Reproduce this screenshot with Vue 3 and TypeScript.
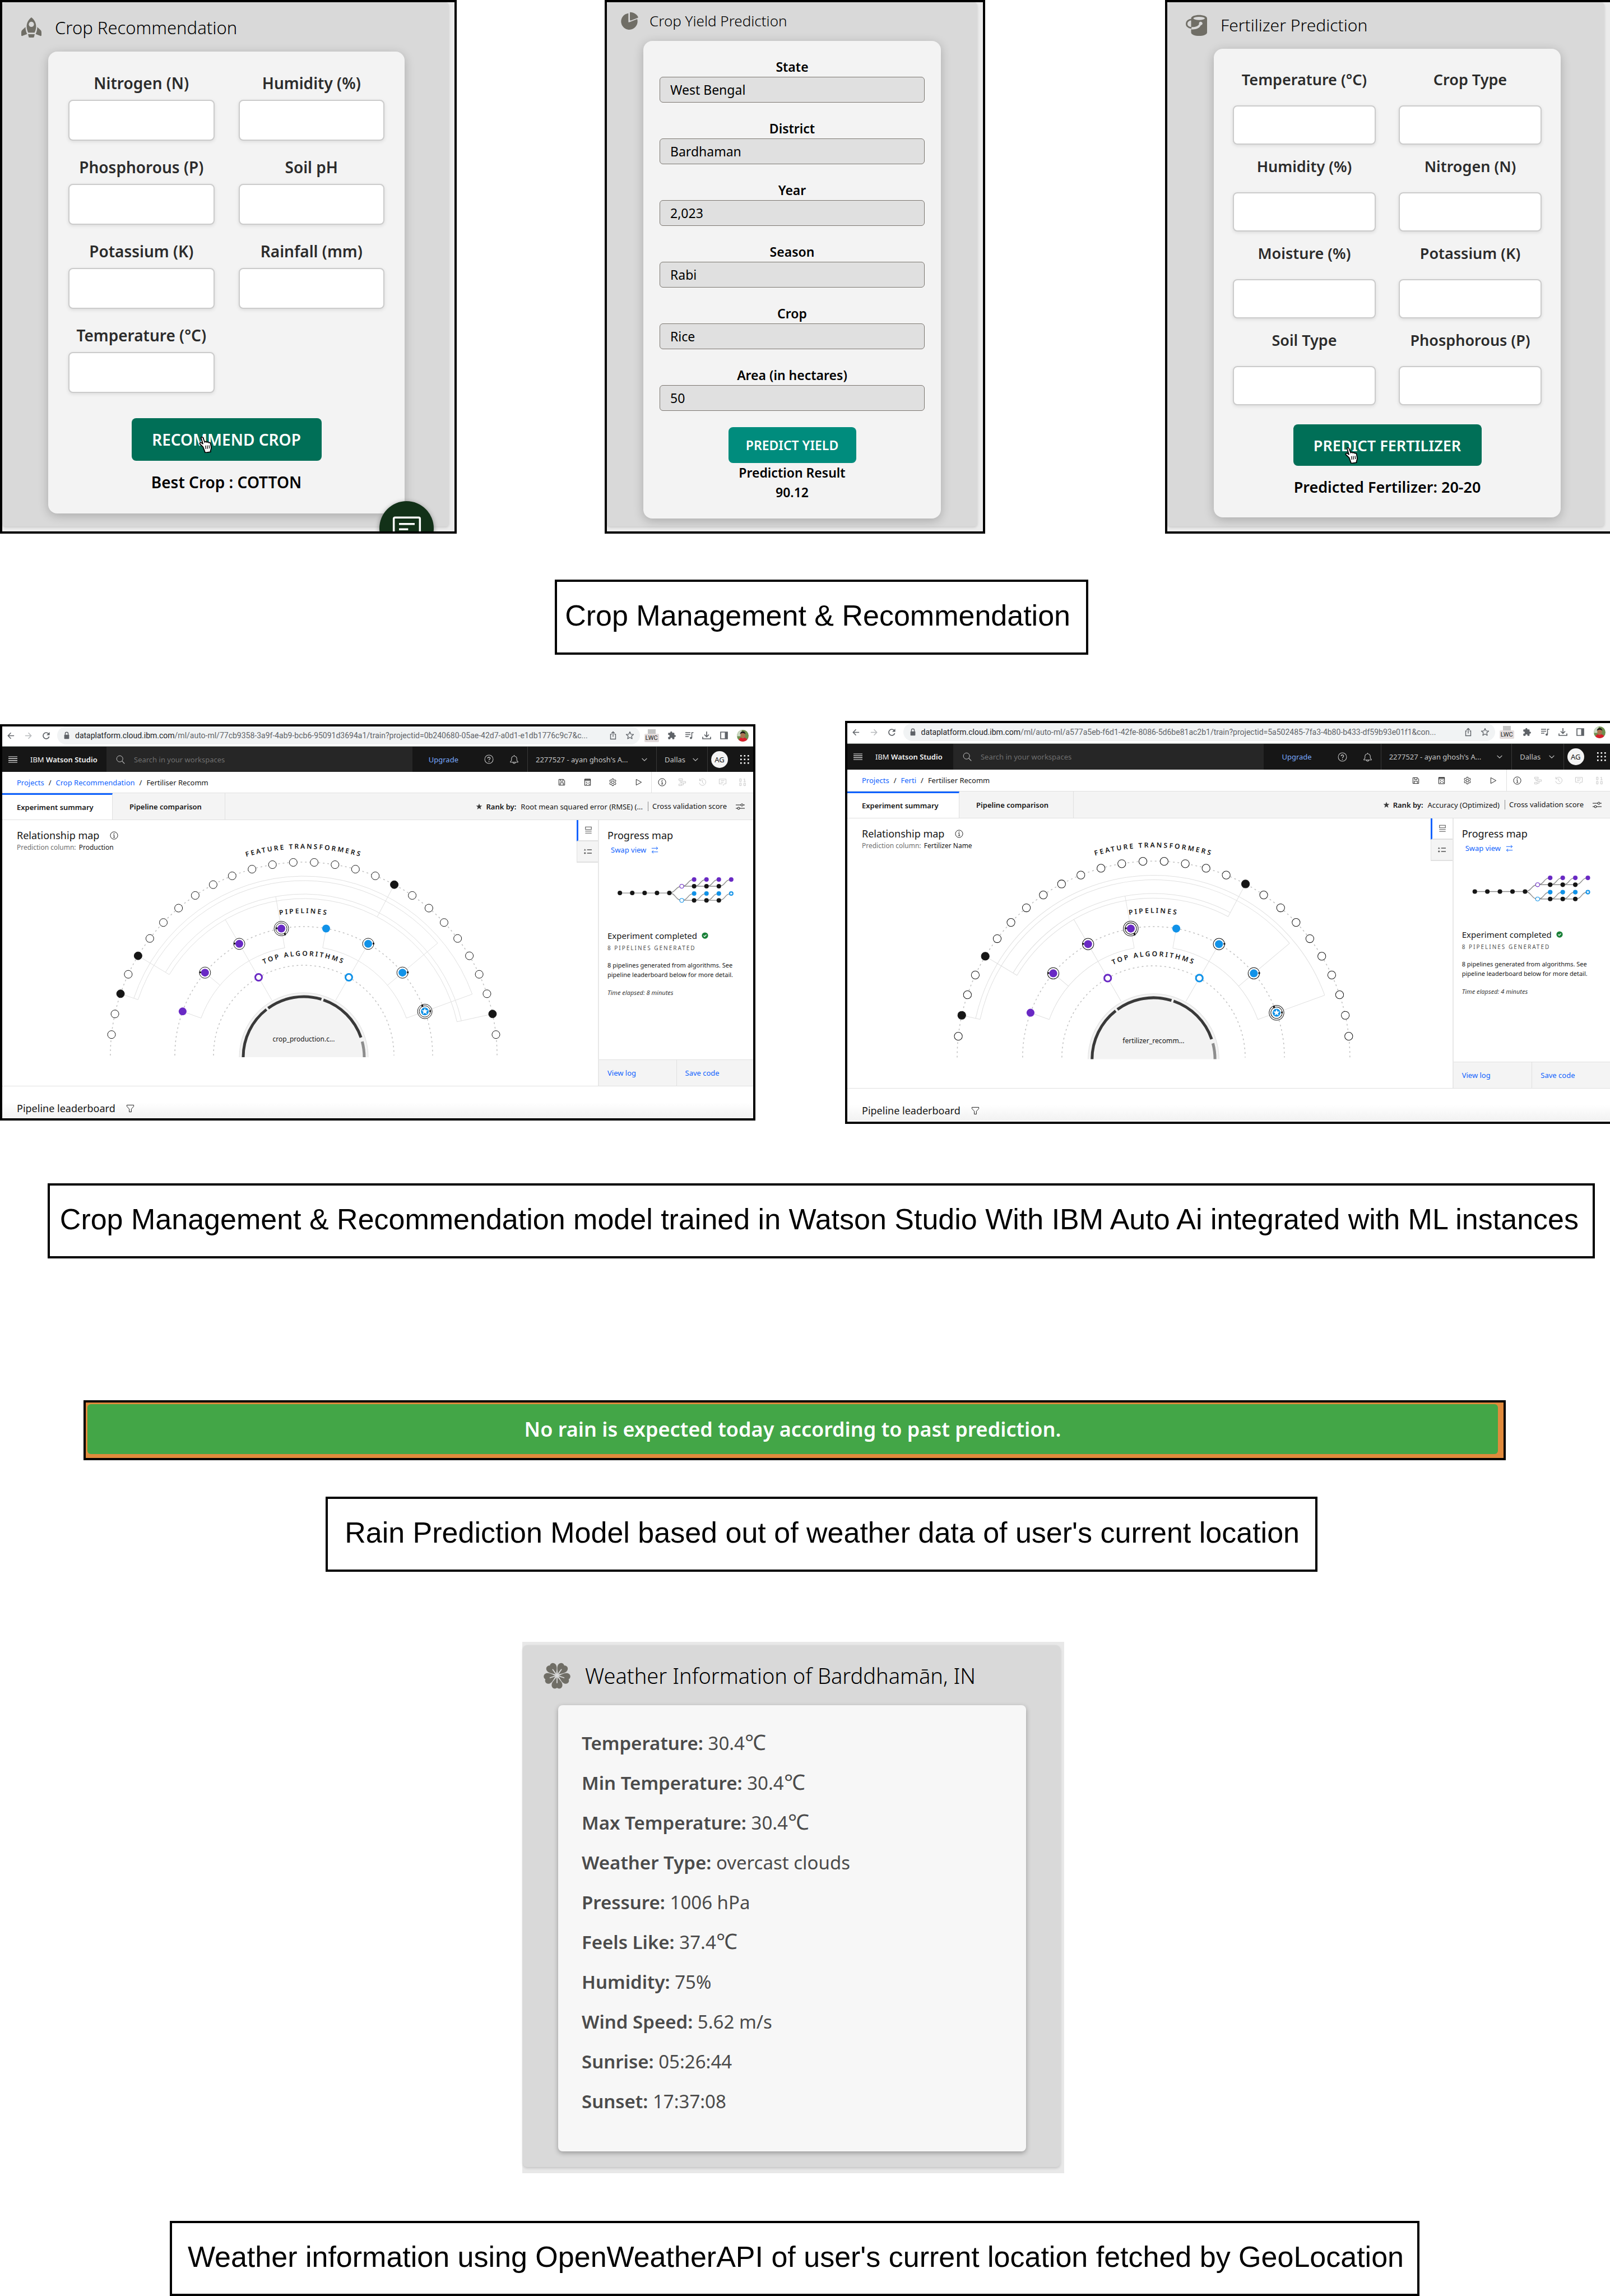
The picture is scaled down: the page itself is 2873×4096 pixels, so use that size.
<script setup lang="ts">
import { h, ref } from 'vue'

interface Studio {
  id: string
  urlRest: string
  project: string
  column: string
  rank: string
  file: string
  minutes: number
  filled: number[]
  outerStart: number
  innerEnd: number
}

const S = 'fill="none" stroke="currentColor"'
const glyphs: Record<string, string> = {
  rocket:
    '<path fill="currentColor" d="M12 0c3.400 2.600 5.600 6.200 5.600 10.600 0 2.700-.7 5.100-1.800 7.600H8.200c-1.100-2.500-1.800-4.900-1.800-7.600C6.400 6.200 8.600 2.600 12 0zM5 11.500c0 3 .7 5.600 1.900 8.300L1.300 22c-.7.300-1.300 0-1.300-.8v-3.400c0-1.300.5-2.400 1.500-3.200zM19 11.500c0 3-.7 5.600-1.900 8.300l5.600 2.200c.7.300 1.300 0 1.300-.8v-3.400c0-1.300-.5-2.400-1.500-3.200zM8 20h8l-.8 3.200c-.1.500-.5.800-1 .8H9.800c-.5 0-.9-.3-1-.8z"/><circle cx="12" cy="8.300" r="3.100" fill="#d9d9d9"/>',
  pie:
    '<path fill="currentColor" d="M10 2v11.300c0 .6.5.900 1 .7l10.800-4.200A11 11 0 1 1 10 2z"/><path fill="currentColor" d="M12.500.6c4.600.2 8.600 2.600 10.500 6.400.2.400 0 .8-.4 1l-9.100 3.600c-.8.300-1.500-.1-1.500-.9V1.100c0-.3.200-.5.500-.5z"/>',
  bucket:
    '<path fill="currentColor" d="M6 4.500C6 1.800 10.500.5 15 .5s9 1.300 9 4V20c0 2.600-4.500 4-9 4s-9-1.400-9-4v-3.500c4 .6 9-.4 11-4.500a2 2 0 1 0-2-1.200C14 13.500 9.500 14.500 6 14z"/><ellipse cx="15" cy="4.300" rx="6.500" ry="1.800" fill="#d9d9d9"/><path fill="none" stroke="currentColor" stroke-width="1.800" d="M7 5.500C3 6 .9 7.800.9 10.500c0 2.400 2.400 4 5.600 4.600"/>',
  clover:
    [0, 72, 144, 216, 288]
      .map(
        (a) =>
          `<g transform="rotate(${a + 36} 12 12)"><path fill="currentColor" d="M12 11C10.500 8.500 7.200 6.500 7.200 3.500 7.200 1.500 8.500.3 10 .3c.8 0 1.500.3 2 .8.500-.5 1.200-.8 2-.8 1.500 0 2.800 1.200 2.800 3.200 0 3-3.300 5-4.800 7.500z"/><path stroke="#d9d9d9" stroke-width=".9" stroke-linecap="round" d="M12 11V5.500"/></g>`,
      )
      .join(''),
  chat: `<path ${S} stroke-width="1.500" d="M3 3.500h18a1 1 0 0 1 1 1V19a1 1 0 0 1-1 1h-6l-3 3-3-3H3a1 1 0 0 1-1-1V4.500a1 1 0 0 1 1-1zM6 8.500h12M6 12.500h7"/>`,
  hand:
    '<path fill="#fff" stroke="#000" stroke-width="1.400" stroke-linejoin="round" d="M7.500 15.500 3.200 11.600c-1.300-1.400.6-3.200 2-2.100l2 1.500L4.800 3.200c-.5-1.800 1.900-2.600 2.600-.8L10 8.800c.7-1.500 2.600-1.200 2.900.1.900-1.100 2.500-.6 2.800.6 1-.8 2.400-.1 2.500 1.200l.9 5.300c.2 2-.3 3-1 4.800l.2 1.700-7.800 1.200z"/><path stroke="#000" stroke-width="1" d="m10.800 13.500.8 5M13.400 13.200l.7 5M16 13l.6 4.600"/>',
  back: `<path ${S} stroke-width="1.600" d="M14 8H2.500M8 2.500 2.500 8 8 13.500"/>`,
  forward: `<path ${S} stroke-width="1.600" d="M2 8h11.500M8 2.500 13.500 8 8 13.500"/>`,
  reload: `<path ${S} stroke-width="1.800" d="M13.500 9.500A5.800 5.800 0 1 1 12.500 4.400L13.500 5.500"/><path fill="currentColor" d="M14.500 1v6h-6z"/>`,
  lock: `<rect x="3" y="6.500" width="10" height="8.500" rx="1" fill="currentColor"/><path ${S} stroke-width="1.600" d="M5 7V4.500a3 3 0 0 1 6 0V7"/>`,
  share: `<path ${S} stroke-width="1.400" d="M5.500 6H3.500v8.500h9V6h-2M8 10.500V1.500M5 4.300 8 1.500l3 2.800"/>`,
  star: `<path ${S} stroke-width="1.300" stroke-linejoin="round" d="m8 1.500 1.900 4.300 4.600.4-3.500 3.100 1 4.600L8 11.500l-4 2.400 1-4.600L1.500 6.200l4.600-.4z"/>`,
  starFill:
    '<path fill="currentColor" d="m8 .8 1.900 5h5.300L11 9.100l1.600 5.500L8 11.400l-4.600 3.200L5 9.100.8 5.800h5.300z"/>',
  puzzle:
    '<path fill="currentColor" d="M13.300 7.300h-.9V4.500c0-.8-.6-1.300-1.300-1.300H8.500V2.500a1.700 1.700 0 0 0-3.400 0v.7H2.600c-.7 0-1.300.5-1.300 1.300V7h.8a1.900 1.900 0 0 1 0 3.800h-.8v2.600c0 .7.600 1.300 1.300 1.300h2.600v-.9a1.800 1.800 0 0 1 3.600 0v.9h2.300c.7 0 1.300-.6 1.300-1.300v-2.700h.9a1.700 1.700 0 0 0 0-3.400z"/>',
  playlist: `<path ${S} stroke-width="1.500" d="M1 3h9M1 6.500h9M1 10h6M12.500 12.500V3h3"/><circle cx="11" cy="12.500" r="2" fill="currentColor"/>`,
  download: `<path ${S} stroke-width="1.700" d="M8 1v9M4 6.500 8 10.500l4-4M1 10.500V14h14v-3.500"/>`,
  sidebar: `<path ${S} stroke-width="1.700" d="M2 2h12v12H2z"/><path fill="currentColor" d="M9.500 2H14v12H9.500z"/>`,
  menu: `<path ${S} stroke-width="1.200" d="M0 3h16M0 6.300h16M0 9.700h16M0 13h16"/>`,
  search: `<circle cx="6.700" cy="6.700" r="5.500" ${S}/><path ${S} stroke-width="1.100" d="m10.700 10.700 4.600 4.600"/>`,
  help: `<circle cx="8" cy="8" r="7" ${S}/><path ${S} stroke-width="1.200" d="M5.900 6.500c0-2.700 4.200-2.700 4.200-.1C10.100 7.900 8 7.900 8 9.700"/><circle cx="8" cy="11.800" r=".8" fill="currentColor"/>`,
  bell: `<path ${S} d="M8 1v1.500M3.500 7a4.500 4.500 0 0 1 9 0v3l1.800 2v1H1.700v-1l1.800-2zM6 13.200c0 2.400 4 2.400 4 0"/>`,
  chevron: `<path ${S} stroke-width="1.300" d="m3 5.500 5 5 5-5"/>`,
  save: `<path ${S} d="M2.500 2.500h8.500l2.500 2.500v8.500h-11zM5.500 2.500v3.500h5V2.500M5 13.500V9h6v4.500"/>`,
  table: `<path ${S} d="M2.500 2h11v12h-11zM2.500 5h11"/><path fill="currentColor" d="M2.500 2h11v1.500h-11zM5 7.500h1.500V9H5zM8 9h1.500v1.500H8zM11 7.500h1V9h-1zM5 11h1.500v1.500H5zM10.500 11H12v1.500h-1.500z"/>`,
  gear: `<circle cx="8" cy="8" r="2.500" ${S}/><path ${S} stroke-linejoin="round" d="M6.700 1.500h2.600l.4 1.900 1.300.7 1.800-.7 1.300 2.300L12.600 7v2l1.500 1.300-1.300 2.300-1.800-.7-1.300.7-.4 1.900H6.700l-.4-1.900-1.300-.7-1.800.7-1.300-2.300L3.400 9V7L1.900 5.700l1.300-2.300 1.800.7 1.300-.7z"/>`,
  play: `<path ${S} stroke-linejoin="round" d="M3.500 2.500 13.500 8l-10 5.500z"/>`,
  info: `<circle cx="8" cy="8" r="7" ${S}/><path ${S} d="M6.500 7H8.200v4.500M6.300 11.500h3.600"/><circle cx="8" cy="4.500" r=".9" fill="currentColor"/>`,
  flow: `<path ${S} d="M1.500 1.500h7v3h-7zM6.500 6.500h8v3h-8zM1.500 11.500h5v3h-5zM4 4.500V8h2.500M10 9.500V13H6.500"/>`,
  history: `<path ${S} d="M2.500 5A6.300 6.300 0 1 1 2 9M2.500 1v4h4M8 4v4.500l3 2.500"/>`,
  comment: `<path ${S} d="M9 14.500 11 11h3.500V2h-13v9H8M4.500 5h7M4.500 8h5"/>`,
  binary: `<path ${S} d="M2 1.500h3v5H2zM9.500 2.500l2-1v5M9.500 6.500h4M2 9.500h3v5H2zM10 9.500h3v5h-3z"/>`,
  sliders: `<path ${S} d="M0 5h9M13 5h3M0 11h3M7 11h9"/><circle cx="11" cy="5" r="2" ${S}/><circle cx="5" cy="11" r="2" ${S}/>`,
  panel: `<path ${S} stroke-width="1.200" d="M2 1.500h12v5H2zM1.500 10h13M1.500 14h13"/>`,
  list: `<path ${S} stroke-width="1.600" d="M6.500 4.500H16M6.500 11.500H16"/><path fill="currentColor" d="m2 2.500 2 3.500H0z"/><circle cx="2" cy="11.500" r="1.700" fill="currentColor"/>`,
  swap: `<path ${S} stroke-width="1.200" d="M1 4h13.500M11 1l3.500 3L11 7M15 12H1.500M5 9l-3.500 3L5 15"/>`,
  check: `<circle cx="8" cy="8" r="7.500" fill="currentColor"/><path fill="none" stroke="#fff" stroke-width="1.700" d="m4.700 8 2.400 2.400 4.300-4.300"/>`,
  filter: `<path ${S} d="M1.500 1.500h13v2.500L10 9v5.500H6V9L1.500 4z"/>`,
}

const Icon = (props: { name: string; box?: number }) =>
  h('svg', {
    viewBox: `0 0 ${props.box ?? 16} ${props.box ?? 16}`,
    'aria-hidden': 'true',
    innerHTML: glyphs[props.name],
  })
Icon.props = ['name', 'box']

const cropFields = [
  'Nitrogen (N)', 'Humidity (%)', 'Phosphorous (P)', 'Soil pH',
  'Potassium (K)', 'Rainfall (mm)', 'Temperature (°C)',
]
const fertilizerFields = [
  'Temperature (°C)', 'Crop Type', 'Humidity (%)', 'Nitrogen (N)',
  'Moisture (%)', 'Potassium (K)', 'Soil Type', 'Phosphorous (P)',
]
const yieldFields = ref([
  { label: 'State', value: 'West Bengal' },
  { label: 'District', value: 'Bardhaman' },
  { label: 'Year', value: '2,023' },
  { label: 'Season', value: 'Rabi' },
  { label: 'Crop', value: 'Rice' },
  { label: 'Area (in hectares)', value: '50' },
])

const weather = [
  { label: 'Temperature', value: '30.4', unit: '℃' },
  { label: 'Min Temperature', value: '30.4', unit: '℃' },
  { label: 'Max Temperature', value: '30.4', unit: '℃' },
  { label: 'Weather Type', value: 'overcast clouds' },
  { label: 'Pressure', value: '1006 hPa' },
  { label: 'Feels Like', value: '37.4', unit: '℃' },
  { label: 'Humidity', value: '75%' },
  { label: 'Wind Speed', value: '5.62 m/s' },
  { label: 'Sunrise', value: '05:26:44' },
  { label: 'Sunset', value: '17:37:08' },
]

const studios: Studio[] = [
  {
    id: 'a',
    urlRest: '/ml/auto-ml/77cb9358-3a9f-4ab9-bcb6-95091d3694a1/train?projectid=0b240680-05ae-42d7-a0d1-e1db1776c9c7&c...',
    project: 'Crop Recommendation',
    column: 'Production',
    rank: 'Root mean squared error (RMSE) (...',
    file: 'crop_production.c...',
    minutes: 8,
    filled: [3, 5, 19, 27],
    outerStart: 3,
    innerEnd: 27,
  },
  {
    id: 'b',
    urlRest: '/ml/auto-ml/a577a5eb-f6d1-42fe-8086-5d6be81ac2b1/train?projectid=5a502485-7fa3-4b80-b433-df59b93e01f1&con...',
    project: 'Ferti',
    column: 'Fertilizer Name',
    rank: 'Accuracy (Optimized)',
    file: 'fertilizer_recomm...',
    minutes: 4,
    filled: [2, 5, 19],
    outerStart: 2,
    innerEnd: 19,
  },
]

// Relationship map geometry: angles run clockwise from the left horizon.
const CX = 538
const CY = 420
const STEP = 180 / 29
const at = (deg: number, r: number, cy = CY) => {
  const t = (deg * Math.PI) / 180
  return { x: CX - r * Math.cos(t), y: cy - r * Math.sin(t) }
}
const arc = (from: number, to: number, r: number, cy = CY) => {
  const a = at(from, r, cy)
  const b = at(to, r, cy)
  return `M${a.x} ${a.y}A${r} ${r} 0 0 1 ${b.x} ${b.y}`
}
const spoke = (deg: number, r1: number, r2: number) => {
  const a = at(deg, r1)
  const b = at(deg, r2)
  return `M${a.x} ${a.y}L${b.x} ${b.y}`
}
const links = (s: Studio) =>
  [
    arc(s.outerStart * STEP, 160, 320),
    arc(s.outerStart * STEP, 140, 312),
    arc(5 * STEP, s.innerEnd * STEP, 288),
    arc(5 * STEP, s.innerEnd * STEP, 280),
    spoke(s.outerStart * STEP, 345, 312),
    spoke(5 * STEP, 345, 280),
    spoke(19 * STEP, 345, 280),
    s.innerEnd === 19 ? '' : spoke(s.innerEnd * STEP, 345, 280),
    spoke(20, 230, 195), spoke(40, 230, 195), spoke(60, 280, 114), spoke(80, 288, 195),
    spoke(100, 230, 195), spoke(120, 230, 114), spoke(140, 312, 195), spoke(160, 320, 195),
    arc(20, 80, 195), arc(100, 160, 195),
  ].join('')
const features = Array.from({ length: 28 }, (_, i) => ({ n: i + 1, ...at((i + 1) * STEP, 345) }))
const pipelines = [20, 40, 60, 80, 100, 120, 140, 160].map((deg, i) => ({
  ...at(deg, 230),
  color: i < 4 ? '#6929c4' : '#1192e8',
  rings: [0, 1, 1, 2, 0, 1, 1, 2][i],
  side: i < 4 ? -1 : 1,
}))
const starPoints = (cx: number, cy: number, r: number) =>
  Array.from({ length: 10 }, (_, i) => {
    const a = ((i * 36 - 90) * Math.PI) / 180
    const q = i % 2 ? r * 0.42 : r
    return `${cx + q * Math.cos(a)},${cy + q * Math.sin(a)}`
  }).join(' ')
const branchX = [169, 191, 213]
</script>

<template>
  <main class="board">
    <section class="forms">
      <div class="frame frame-crop">
        <div class="panel">
          <h2 class="title"><Icon name="rocket" :box="24" class="title-icon" />Crop Recommendation</h2>
          <form class="card" @submit.prevent>
            <div class="fields">
              <div v-for="(f, i) in cropFields" :key="f" class="field">
                <label :for="'crop-' + i">{{ f }}</label>
                <input :id="'crop-' + i" type="text" />
              </div>
            </div>
            <button class="go" type="submit">RECOMMEND CROP<Icon name="hand" :box="24" class="pointer" /></button>
            <p class="result">Best Crop : COTTON</p>
          </form>
        </div>
        <button class="fab" type="button" aria-label="Open chat"><Icon name="chat" :box="24" /></button>
      </div>

      <div class="frame frame-yield">
        <div class="panel">
          <h2 class="title"><Icon name="pie" :box="24" class="title-icon" />Crop Yield Prediction</h2>
          <form class="card" @submit.prevent>
            <div class="fields">
              <div v-for="(f, i) in yieldFields" :key="f.label" class="field">
                <label :for="'yield-' + i">{{ f.label }}</label>
                <input :id="'yield-' + i" v-model="f.value" type="text" />
              </div>
            </div>
            <button class="go" type="submit">PREDICT YIELD</button>
            <p class="result">Prediction Result<br />90.12</p>
          </form>
        </div>
      </div>

      <div class="frame frame-fertilizer">
        <div class="panel">
          <h2 class="title"><Icon name="bucket" :box="24" class="title-icon" />Fertilizer Prediction</h2>
          <form class="card" @submit.prevent>
            <div class="fields">
              <div v-for="(f, i) in fertilizerFields" :key="f" class="field">
                <label :for="'fert-' + i">{{ f }}</label>
                <input :id="'fert-' + i" type="text" />
              </div>
            </div>
            <button class="go" type="submit">PREDICT FERTILIZER<Icon name="hand" :box="24" class="pointer" /></button>
            <p class="result">Predicted Fertilizer: 20-20</p>
          </form>
        </div>
      </div>
    </section>

    <p class="caption caption-forms">Crop Management &amp; Recommendation</p>

    <section class="studios">
      <article v-for="s in studios" :key="s.id" class="studio" :class="'studio-' + s.id">
        <div class="browser">
          <span class="nav-icons">
            <Icon name="back" /><Icon name="forward" class="dim" /><Icon name="reload" />
          </span>
          <div class="address">
            <Icon name="lock" class="lock" />
            <span class="url"><b>dataplatform.cloud.ibm.com</b>{{ s.urlRest }}</span>
            <Icon name="share" /><Icon name="star" />
          </div>
          <div class="extensions">
            <span class="lwc"><i></i><em>LWC</em></span>
            <Icon name="puzzle" /><Icon name="playlist" /><Icon name="download" /><Icon name="sidebar" />
            <svg class="photo" viewBox="0 0 22 22" aria-hidden="true">
              <clipPath :id="'photo-' + s.id"><circle cx="11" cy="11" r="11" /></clipPath>
              <g :clip-path="`url(#photo-${s.id})`">
                <rect width="22" height="22" fill="#6f8f4e" />
                <rect width="9" height="12" fill="#c9d6c0" />
                <path d="M3 22c0-6 4-8 8-8s9 2 9 8z" fill="#d8202c" />
                <ellipse cx="11" cy="10" rx="4.500" ry="6" fill="#a9744f" />
                <path d="M6 8c0-7 10-7 10 0-3-2-6-3-10 0z" fill="#1d1a18" />
              </g>
            </svg>
          </div>
        </div>

        <header class="topbar">
          <div class="brand"><Icon name="menu" /><span>IBM <b>Watson Studio</b></span></div>
          <div class="search">
            <Icon name="search" />
            <input type="search" placeholder="Search in your workspaces" aria-label="Search in your workspaces" />
          </div>
          <div class="account-links"><a href="#">Upgrade</a><Icon name="help" /><Icon name="bell" /></div>
          <button class="drop" type="button"><span>2277527 - ayan ghosh's A...</span><Icon name="chevron" /></button>
          <button class="drop" type="button"><span>Dallas</span><Icon name="chevron" /></button>
          <div class="user">
            <span class="initials">AG</span>
            <svg class="apps" viewBox="0 0 16 16" aria-hidden="true">
              <template v-for="r in 3" :key="r">
                <rect v-for="c in 3" :key="c" :x="(c - 1) * 6.5" :y="(r - 1) * 6.5" width="2.600" height="2.600" fill="#fff" />
              </template>
            </svg>
          </div>
        </header>

        <div class="crumbs">
          <nav>
            <a href="#">Projects</a><i>/</i><a href="#">{{ s.project }}</a><i>/</i><span>Fertiliser Recomm</span>
          </nav>
          <div class="tools"><Icon name="save" /><Icon name="table" /><Icon name="gear" /><Icon name="play" /></div>
          <div class="tools tools-end">
            <Icon name="info" /><Icon name="flow" class="off" /><Icon name="history" class="off" />
            <Icon name="comment" class="off" /><Icon name="binary" class="off" />
          </div>
        </div>

        <div class="tabs">
          <button class="tab active" type="button">Experiment summary</button>
          <button class="tab" type="button">Pipeline comparison</button>
          <div class="rank">
            <Icon name="starFill" class="rank-star" /><b>Rank by:</b><span>{{ s.rank }}</span>
            <span class="score">Cross validation score</span><Icon name="sliders" class="sliders" />
          </div>
        </div>

        <div class="work">
          <div class="map">
            <svg class="chart" viewBox="0 0 1025 474" aria-hidden="true">
              <defs>
                <path :id="'ft-' + s.id" :d="arc(0, 180, 369)" />
                <path :id="'pl-' + s.id" :d="arc(0, 180, 254)" />
                <path :id="'ta-' + s.id" :d="arc(0, 180, 178)" />
              </defs>
              <g class="dotted">
                <path :d="arc(0, 180, 345)" /><path :d="arc(0, 180, 230)" /><path :d="arc(0, 180, 161)" />
              </g>
              <path :d="links(s)" class="link" />
              <path :d="arc(0, 180, 115, 423)" class="disc" />
              <path :d="arc(0, 52, 108, 423)" class="ring-dark" />
              <path :d="arc(54, 107, 108, 423)" class="ring-dark" />
              <path :d="arc(109, 161, 108, 423)" class="ring-dark" />
              <path :d="arc(165, 180, 108, 423)" class="ring-grey" />
              <circle
                v-for="f in features" :key="f.n" :cx="f.x" :cy="f.y" r="7"
                :fill="s.filled.includes(f.n) ? '#161616' : '#fff'" stroke="#161616"
              />
              <g v-for="(p, i) in pipelines" :key="i">
                <circle v-if="p.rings === 2" :cx="p.x" :cy="p.y" r="13" fill="#fff" stroke="#161616" />
                <circle v-if="p.rings" :cx="p.x" :cy="p.y" r="10" fill="#fff" stroke="#161616" />
                <circle :cx="p.x" :cy="p.y" r="7" :fill="p.color" />
                <rect v-if="p.rings" :x="p.x + p.side * 9 - 1" :y="p.y - 2" width="3" height="3" fill="#161616" />
                <rect
                  v-if="p.rings === 2" :x="p.x + (i < 4 ? 5 : -6)" :y="p.y + (i < 4 ? 8 : -12)"
                  width="3" height="4" fill="#161616"
                />
                <polygon v-if="i === 7" :points="starPoints(p.x, p.y, 6)" fill="#fff" />
              </g>
              <circle :cx="at(60, 161).x" :cy="at(60, 161).y" r="6" class="algo purple" />
              <circle :cx="at(120, 161).x" :cy="at(120, 161).y" r="6" class="algo blue" />
              <text class="arc-text"><textPath :href="'#ft-' + s.id" startOffset="50%">FEATURE TRANSFORMERS</textPath></text>
              <text class="arc-text"><textPath :href="'#pl-' + s.id" startOffset="50%">PIPELINES</textPath></text>
              <text class="arc-text"><textPath :href="'#ta-' + s.id" startOffset="50%">TOP ALGORITHMS</textPath></text>
              <text :x="CX" y="395" class="file">{{ s.file }}</text>
            </svg>
            <div class="map-head">
              <h3>Relationship map<Icon name="info" class="info" /></h3>
              <p>Prediction column: <b>{{ s.column }}</b></p>
            </div>
          </div>

          <div class="rail">
            <button type="button" class="rail-tab on" aria-label="Progress map"><Icon name="panel" /></button>
            <button type="button" class="rail-tab" aria-label="Legend"><Icon name="list" /></button>
          </div>

          <aside class="side">
            <h3>Progress map</h3>
            <a href="#" class="swap">Swap view<Icon name="swap" /></a>
            <svg class="progress" viewBox="0 0 274 50" aria-hidden="true">
              <g fill="none" stroke="#8d8d8d" stroke-width="1.400">
                <path d="M37 28H125M125 28C136 28 136 16 147 16H213M125 28C136 28 136 41 147 41H213" />
                <path v-for="x in [147, 169, 191, 213]" :key="x" :d="`M${x} 16c12 0 10-12 22-12M${x} 41c12 0 10-12 22-12`" />
              </g>
              <circle v-for="x in [37, 59, 81, 103, 125]" :key="x" :cx="x" cy="28" r="4" fill="#161616" />
              <circle cx="147" cy="16" r="3.500" fill="#fff" stroke="#6929c4" />
              <circle cx="147" cy="41" r="3.500" fill="#fff" stroke="#1192e8" />
              <g v-for="x in branchX" :key="x">
                <circle :cx="x" cy="16" r="4" fill="#161616" />
                <circle :cx="x" cy="41" r="4" fill="#161616" />
                <circle :cx="x" cy="4" r="4" fill="#6929c4" />
                <circle :cx="x" cy="29" r="4" fill="#1192e8" />
              </g>
              <circle cx="235" cy="4" r="4" fill="#6929c4" />
              <circle cx="235" cy="29" r="4" fill="#1192e8" />
              <polygon :points="starPoints(235, 29, 3)" fill="#fff" />
            </svg>
            <h4>Experiment completed<Icon name="check" class="check" /></h4>
            <p class="count">8 PIPELINES GENERATED</p>
            <p class="note">8 pipelines generated from algorithms. See<br />pipeline leaderboard below for more detail.</p>
            <p class="elapsed">Time elapsed: {{ s.minutes }} minutes</p>
            <div class="actions"><a href="#">View log</a><a href="#">Save code</a></div>
          </aside>
        </div>

        <div class="leader"><h3>Pipeline leaderboard<Icon name="filter" class="info" /></h3></div>
      </article>
    </section>

    <p class="caption caption-studio">
      Crop Management &amp; Recommendation model trained in Watson Studio With IBM Auto Ai integrated with ML instances
    </p>

    <div class="banner"><p>No rain is expected today according to past prediction.</p></div>

    <p class="caption caption-rain">Rain Prediction Model based out of weather data of user's current location</p>

    <section class="weather">
      <div class="weather-panel">
        <h2 class="title"><Icon name="clover" :box="24" class="title-icon" />Weather Information of Barddhamān, IN</h2>
        <ul>
          <li v-for="w in weather" :key="w.label">
            <b>{{ w.label }}:</b> {{ w.value }}<span v-if="w.unit" class="unit">{{ w.unit }}</span>
          </li>
        </ul>
      </div>
    </section>

    <p class="caption caption-weather">
      Weather information using OpenWeatherAPI of user's current location fetched by GeoLocation
    </p>
  </main>
</template>

<style>
body {
  margin: 0;
  background: #fff;
}
</style>

<style scoped>
* {
  box-sizing: border-box;
}
.board {
  width: 100%;
  overflow: hidden;
  color: #000;
  font-family: 'Noto Sans', sans-serif;
}
h2, h3, h4, p, ul {
  margin: 0;
  padding: 0;
  font-weight: 400;
}
button, input {
  font-family: inherit;
  margin: 0;
}
svg {
  display: block;
  flex: none;
}
a {
  color: #0f62fe;
  text-decoration: none;
}

/* prediction forms */
.forms {
  display: grid;
  grid-template-columns: 815fr 264fr 679fr 321fr 794fr;
}
.frame {
  position: relative;
  height: 952px;
  border: 4px solid #000;
  background: #ebebeb;
  overflow: hidden;
}
.frame-crop { grid-column: 1; }
.frame-yield { grid-column: 3; }
.frame-fertilizer {
  grid-column: 5;
  border-right: 0;
}
.panel {
  height: 935px;
  margin-right: 10px;
  background: #d9d9d9;
  border-radius: 6px;
  box-shadow: 0 2px 4px rgba(0, 0, 0, 0.14);
}
.title {
  display: flex;
  align-items: center;
  font-weight: 300;
}
.title-icon { color: #706e66; }
.card {
  background: #f3f3f3;
  border-radius: 16px;
  box-shadow: 0 4px 18px rgba(0, 0, 0, 0.22);
  text-align: center;
}
.fields { display: grid; }
.field {
  display: flex;
  flex-direction: column;
}
.go {
  position: relative;
  display: block;
  margin: 0 auto;
  padding: 0;
  border: 0;
  border-radius: 8px;
  background: #006f57;
  color: #fff;
  font-size: inherit;
  font-weight: 600;
}
.result { font-weight: 600; }
.pointer {
  position: absolute;
  width: 30px;
  height: 30px;
}
.frame-crop label, .frame-fertilizer label {
  line-height: 36px;
  font-weight: 600;
  color: #2b2b2b;
}
.frame-crop .field input, .frame-fertilizer .field input {
  width: 100%;
  border: 2px solid #cbcbcb;
  border-radius: 8px;
  background: #fff;
  box-shadow: 0 2px 6px rgba(0, 0, 0, 0.1);
}
.frame-crop .result, .frame-fertilizer .result {
  margin-top: 20px;
  line-height: 36px;
}

.frame-crop .title {
  padding: 23px 0 21px 34px;
  font-size: 31px;
  line-height: 44px;
}
.frame-crop .title-icon {
  width: 36px;
  height: 40px;
  margin-right: 24px;
}
.frame-crop .card {
  margin: 0 79px 0 82px;
  padding: 38px 36px;
  font-size: 28px;
}
.frame-crop .fields {
  grid-template-columns: 1fr 1fr;
  gap: 29px 43px;
}
.frame-crop .field { gap: 12px; }
.frame-crop .field input { height: 73px; }
.frame-crop .go {
  margin-top: 45px;
  width: 339px;
  height: 76px;
}
.frame-crop .pointer { left: 118px; top: 32px; }
.fab {
  position: absolute;
  left: 673px;
  top: 890px;
  width: 97px;
  height: 97px;
  border: 0;
  border-radius: 50%;
  background: #123118;
  color: #fff;
  padding: 0;
  box-shadow: 0 2px 8px rgba(0, 0, 0, 0.4);
}
.fab svg {
  width: 56px;
  height: 56px;
  margin: 0 auto;
}

.frame-yield .title {
  padding: 13px 0 16px 25px;
  font-size: 26px;
  line-height: 40px;
}
.frame-yield .title-icon {
  width: 32px;
  height: 32px;
  margin-right: 19px;
}
.frame-yield .card {
  margin: 0 65px;
  padding: 30px 29px 29px;
  font-size: 23px;
}
.frame-yield .fields { gap: 30px; }
.frame-yield .field { gap: 2px; }
.frame-yield label {
  line-height: 32px;
  font-weight: 600;
}
.frame-yield .field input {
  width: 100%;
  height: 46px;
  padding: 0 18px;
  border: 1px solid #7b7670;
  border-radius: 6px;
  background: #e0e0e0;
  font-size: 23px;
  color: #000;
}
.frame-yield .go {
  margin-top: 29px;
  width: 228px;
  height: 64px;
  background: #008c7d;
}
.frame-yield .result { line-height: 35px; }

.frame-fertilizer .title {
  padding: 19px 0 20px 33px;
  font-size: 30px;
  line-height: 44px;
}
.frame-fertilizer .title-icon {
  width: 38px;
  height: 38px;
  margin-right: 24px;
}
.frame-fertilizer .card {
  margin: 0 78px 0 83px;
  padding: 37px 34px 36px;
  font-size: 27px;
}
.frame-fertilizer .fields {
  grid-template-columns: 1fr 1fr;
  gap: 21px 41px;
}
.frame-fertilizer .field { gap: 28px; }
.frame-fertilizer .field input { height: 70px; }
.frame-fertilizer .go {
  margin-top: 34px;
  width: 336px;
  height: 74px;
}
.frame-fertilizer .pointer { left: 90px; top: 40px; }

/* captions */
.caption {
  width: fit-content;
  height: 134px;
  border: 4px solid #000;
  font-family: 'Liberation Sans', sans-serif;
  font-size: 52px;
  line-height: 120px;
  white-space: nowrap;
}
.caption-forms {
  margin: 82px 931px 0 auto;
  padding: 0 28px 0 14px;
}
.caption-studio {
  margin: 106px 27px 0 auto;
  padding: 0 25px 0 18px;
}
.caption-rain {
  margin: 65px 522px 0 auto;
  padding: 0 28px 0 30px;
}
.caption-weather {
  margin: 85px 340px 0 auto;
  padding: 0 24px 0 28px;
}

/* studio windows */
.studios {
  display: grid;
  grid-template-columns: 1348fr 160fr 1365fr;
  margin-top: 118px;
}
.studio {
  border: 4px solid #000;
  background: #fff;
  font-size: 12px;
  color: #161616;
}
.studio-a {
  grid-column: 1;
  margin: 6px 0 6px;
}
.studio-b {
  grid-column: 3;
  border-right: 0;
}
.studio svg {
  width: 16px;
  height: 16px;
}
.browser {
  display: grid;
  grid-template-columns: 98fr 1040fr 202fr;
  height: 36px;
  border-bottom: 1px solid #a3aaa6;
  color: #5f6368;
  font-family: Roboto, sans-serif;
}
.studio-b .browser { height: 37px; }
.nav-icons, .extensions {
  display: flex;
  align-items: center;
  justify-content: space-around;
  height: 32px;
}
.nav-icons { padding-right: 4px; }
.studio .nav-icons svg { width: 15px; height: 15px; }
.dim { color: #b8babd; }
.address {
  display: flex;
  align-items: center;
  gap: 14px;
  min-width: 0;
  height: 32px;
  padding: 0 10px;
  border-radius: 16px;
  background: #f1f3f4;
}
.studio .address .lock {
  width: 14px;
  height: 14px;
  margin-right: -6px;
}
.url {
  flex: 1;
  overflow: hidden;
  white-space: nowrap;
  font-size: 14px;
}
.url b { font-weight: 400; color: #202124; }
.lwc {
  width: 26px;
  height: 24px;
}
.lwc i {
  display: block;
  width: 14px;
  height: 8px;
  margin: 1px auto 0;
  background: #c4c4c4;
}
.lwc em {
  display: block;
  border-radius: 2px;
  background: #e3dcdc;
  color: #222;
  font-size: 11px;
  line-height: 15px;
  font-style: normal;
  text-align: center;
}
.studio .photo { width: 21px; height: 21px; }
.topbar {
  display: grid;
  grid-template-columns: 186fr 546fr 205fr 230fr 91fr 82fr;
  height: 45px;
  background: #161616;
  color: #f4f4f4;
  font-size: 13px;
}
.studio-b .topbar { height: 46px; }
.topbar > * {
  display: flex;
  align-items: center;
  min-width: 0;
}
.brand { padding-left: 11px; }
.brand svg { margin-right: 23px; }
.brand b { font-weight: 600; }
.search {
  padding-left: 17px;
  background: #262626;
  color: #c6c6c6;
}
.search svg { margin-right: 16px; }
.search input {
  flex: 1;
  border: 0;
  padding: 0;
  background: transparent;
  font-size: 13px;
}
.search input::placeholder { color: #6f6f6f; }
.account-links {
  justify-content: flex-end;
  gap: 28px;
  padding-right: 15px;
  color: #c6c6c6;
}
.account-links a {
  margin-right: 18px;
  color: #78a9ff;
}
.account-links svg { width: 17px; height: 17px; }
.drop {
  justify-content: space-between;
  padding: 0 14px;
  border: 0;
  border-left: 1px solid #393939;
  background: transparent;
  color: #c6c6c6;
  font-size: 13px;
}
.drop svg { width: 14px; height: 14px; }
.drop span { white-space: nowrap; }
.user {
  justify-content: space-between;
  padding: 0 7px 0 6px;
  border-left: 1px solid #393939;
}
.initials {
  width: 30px;
  height: 30px;
  border-radius: 50%;
  background: #f4f4f4;
  color: #161616;
  line-height: 30px;
  text-align: center;
}
.crumbs {
  display: grid;
  grid-template-columns: 976fr 182fr 182fr;
  height: 38px;
  border-bottom: 1px solid #e0e0e0;
}
.studio-b .crumbs { height: 39px; }
.crumbs nav {
  display: flex;
  align-items: center;
  gap: 8px;
  padding-left: 26px;
  font-size: 13px;
}
.crumbs i { font-style: normal; }
.tools {
  display: flex;
  align-items: center;
  justify-content: space-around;
}
.studio .tools svg { width: 15px; height: 15px; }
.tools-end { border-left: 1px solid #e0e0e0; }
.off { color: #c6c6c6; }
.tabs {
  display: grid;
  grid-template-columns: 197fr 201fr 942fr;
  height: 48px;
  border-bottom: 1px solid #e0e0e0;
  background: #f4f4f4;
}
.tab {
  padding: 0 0 0 26px;
  border: 0;
  border-right: 1px solid #e0e0e0;
  background: transparent;
  color: #161616;
  font-size: 13px;
  font-weight: 600;
  text-align: left;
}
.tab.active {
  border-top: 3px solid #0f62fe;
  background: #fff;
}
.tab + .tab { padding-left: 30px; }
.rank {
  display: flex;
  align-items: center;
  justify-content: flex-end;
  padding-right: 15px;
  font-size: 13px;
}
.rank b { margin: 0 8px 0 6px; font-weight: 600; }
.studio .rank-star { width: 12px; height: 12px; color: #393939; }
.score {
  margin-left: 9px;
  padding-left: 7px;
  border-left: 1px solid #8d8d8d;
  line-height: 17px;
}
.sliders { margin-left: 16px; }
.work {
  display: grid;
  grid-template-columns: 1025fr 40fr 275fr;
  border-bottom: 1px solid #e0e0e0;
}
.map {
  display: grid;
  min-width: 0;
}
.map > * { grid-area: 1 / 1; }
.studio .chart {
  width: 100%;
  height: auto;
  overflow: visible;
}
.map-head {
  justify-self: start;
  padding: 14px 0 0 26px;
}
h3 {
  display: flex;
  align-items: center;
  font-size: 18px;
  line-height: 26px;
}
.studio .info {
  width: 15px;
  height: 15px;
  margin-left: 19px;
}
.map-head p {
  font-size: 12px;
  line-height: 18px;
  color: #6f6f6f;
}
.map-head b {
  margin-left: 2px;
  font-weight: 400;
  color: #161616;
}
.dotted path {
  fill: none;
  stroke: #c1c1c1;
  stroke-width: 1.500;
  stroke-dasharray: 3 5;
}
.link {
  fill: none;
  stroke: #e0e0e0;
  stroke-width: 1;
}
.disc {
  fill: #f3f3f3;
  stroke: #e0e0e0;
}
.ring-dark, .ring-grey {
  fill: none;
  stroke: #393939;
  stroke-width: 5;
}
.ring-grey { stroke: #8d8d8d; }
.algo {
  fill: #fff;
  stroke-width: 3;
}
.purple { stroke: #6929c4; }
.blue { stroke: #1192e8; }
.arc-text {
  font-size: 12px;
  font-weight: 600;
  letter-spacing: 3px;
  text-anchor: middle;
  fill: #161616;
}
.file {
  font-size: 12px;
  text-anchor: middle;
  fill: #161616;
}
.rail { border-right: 2px solid #e8e8e8; }
.rail-tab {
  display: flex;
  align-items: center;
  justify-content: center;
  width: 100%;
  height: 38px;
  padding: 0;
  border: 0;
  border-left: 1px solid #e0e0e0;
  border-bottom: 2px solid #e0e0e0;
  background: #f4f4f4;
  color: #525252;
}
.rail-tab.on {
  border-left: 3px solid #0f62fe;
  background: #fff;
}
.studio .rail-tab svg { width: 14px; height: 14px; }
.side {
  display: flex;
  flex-direction: column;
}
.side > * { padding-left: 15px; }
.side h3 { padding-top: 14px; }
.swap {
  display: flex;
  align-items: center;
  gap: 9px;
  margin-left: 6px;
  font-size: 13px;
  line-height: 26px;
}
.studio .swap svg { width: 13px; height: 13px; }
.studio .progress {
  width: 100%;
  height: auto;
  margin-top: 36px;
  padding: 0;
  overflow: visible;
}
h4 {
  display: flex;
  align-items: center;
  margin-top: 44px;
  font-size: 15px;
  line-height: 20px;
}
.studio .check {
  width: 12px;
  height: 12px;
  margin-left: 8px;
  color: #198038;
}
.count {
  margin-top: 4px;
  font-size: 10px;
  line-height: 16px;
  letter-spacing: 2px;
  color: #525252;
}
.note {
  margin-top: 14px;
  font-size: 11px;
  line-height: 17px;
  white-space: nowrap;
}
.elapsed {
  margin-top: 15px;
  font-size: 11px;
  line-height: 17px;
  font-style: italic;
  color: #393939;
}
.side .actions {
  display: grid;
  grid-template-columns: 1fr 1fr;
  height: 47px;
  margin-top: auto;
  padding: 0;
  border-top: 1px solid #e0e0e0;
  background: #f4f4f4;
  font-size: 13px;
  line-height: 46px;
}
.actions a { padding-left: 15px; }
.actions a + a { border-left: 1px solid #e0e0e0; }
.leader {
  height: 57px;
  padding: 26px 0 0 26px;
  background: linear-gradient(#fff 50%, #f2f2f2);
}

/* rain banner */
.banner {
  margin: 253px 186px 0 149px;
  padding: 3px 10px 7px 3px;
  border: 4px solid #000;
  background: #e08a3c;
}
.banner p {
  border-radius: 6px;
  background: #43a647;
  color: #fff;
  font-size: 36px;
  font-weight: 600;
  line-height: 89px;
  text-align: center;
}

/* weather */
.weather {
  margin: 125px 974px 0 932px;
  padding: 6px 7px 11px 1px;
  background: #e8e8e8;
}
.weather-panel {
  padding: 0 61px 28px 63px;
  border-radius: 8px;
  background: #d9d9d9;
  box-shadow: 0 2px 4px rgba(0, 0, 0, 0.16);
}
.weather .title {
  margin-left: -26px;
  padding: 24px 0 23px;
  font-size: 38px;
  line-height: 60px;
  white-space: nowrap;
}
.weather .title-icon {
  width: 48px;
  height: 48px;
  margin-right: 26px;
}
.weather ul {
  padding: 32px 42px 54px;
  border-radius: 8px;
  background: #f7f7f7;
  box-shadow: 0 3px 8px rgba(0, 0, 0, 0.3);
  list-style: none;
}
.weather li {
  height: 71px;
  font-size: 33px;
  line-height: 71px;
  color: #4b4b4b;
}
.weather b { font-weight: 600; }
.unit {
  font-family: 'Liberation Serif', serif;
  font-size: 38px;
  line-height: 1;
}
</style>
